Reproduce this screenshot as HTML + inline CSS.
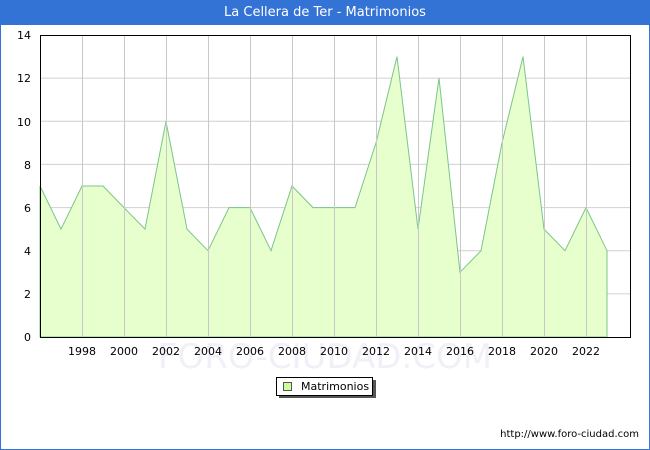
<!DOCTYPE html>
<html><head><style>
body{margin:0;width:650px;height:450px;overflow:hidden;font-family:"DejaVu Sans","Liberation Sans",sans-serif;}
.frame{position:absolute;left:0;top:0;width:648px;height:448px;border:1px solid #3473d6;background:#fff;}
.title{position:absolute;left:0;top:0;width:650px;height:25px;background:#3473d6;color:#fff;font-size:13px;line-height:25px;text-align:center;}
</style></head><body>
<div class="frame"></div>
<div class="title">La Cellera de Ter - Matrimonios</div>
<svg width="650" height="450" style="position:absolute;left:0;top:0" font-family="DejaVu Sans, Liberation Sans, sans-serif" font-size="11">
<text x="325" y="368" font-size="34" fill="#f0f0f8" text-anchor="middle">FORO-CIUDAD.COM</text>
<g stroke="#d0d0d0" stroke-width="1">
<line x1="40" y1="293.9" x2="630" y2="293.9"/><line x1="40" y1="250.7" x2="630" y2="250.7"/>
<line x1="40" y1="207.6" x2="630" y2="207.6"/><line x1="40" y1="164.4" x2="630" y2="164.4"/>
<line x1="40" y1="121.3" x2="630" y2="121.3"/><line x1="40" y1="78.1" x2="630" y2="78.1"/>
</g>
<polygon fill="#e6ffcc" stroke="#7cc48a" stroke-width="1" points="40,337 40,186 61,229.1 82,186 103,186 124,207.6 145,229.1 166,121.3 187,229.1 208,250.7 229,207.6 250,207.6 271,250.7 292,186 313,207.6 334,207.6 355,207.6 376,142.9 397,56.6 418,229.1 439,78.1 460,272.3 481,250.7 502,142.9 523,56.6 544,229.1 565,250.7 586,207.6 607,250.7 607,337"/>
<g stroke="#c8c8c8" stroke-width="1">
<line x1="82.5" y1="35" x2="82.5" y2="337"/><line x1="124.5" y1="35" x2="124.5" y2="337"/>
<line x1="166.5" y1="35" x2="166.5" y2="337"/><line x1="208.5" y1="35" x2="208.5" y2="337"/>
<line x1="250.5" y1="35" x2="250.5" y2="337"/><line x1="292.5" y1="35" x2="292.5" y2="337"/>
<line x1="334.5" y1="35" x2="334.5" y2="337"/><line x1="376.5" y1="35" x2="376.5" y2="337"/>
<line x1="418.5" y1="35" x2="418.5" y2="337"/><line x1="460.5" y1="35" x2="460.5" y2="337"/>
<line x1="502.5" y1="35" x2="502.5" y2="337"/><line x1="544.5" y1="35" x2="544.5" y2="337"/>
<line x1="586.5" y1="35" x2="586.5" y2="337"/>
</g>
<rect x="40.5" y="35.5" width="590" height="302" fill="none" stroke="#000"/>
<g text-anchor="end" fill="#000">
<text x="31" y="341">0</text><text x="31" y="298">2</text><text x="31" y="255">4</text><text x="31" y="212">6</text>
<text x="31" y="169">8</text><text x="31" y="126">10</text><text x="31" y="82">12</text><text x="31" y="39">14</text>
</g>
<g text-anchor="middle" fill="#000">
<text x="82" y="355">1998</text><text x="124" y="355">2000</text><text x="166" y="355">2002</text><text x="208" y="355">2004</text>
<text x="250" y="355">2006</text><text x="292" y="355">2008</text><text x="334" y="355">2010</text><text x="376" y="355">2012</text>
<text x="418" y="355">2014</text><text x="460" y="355">2016</text><text x="502" y="355">2018</text><text x="544" y="355">2020</text>
<text x="586" y="355">2022</text>
</g>
<rect x="279" y="380" width="97" height="18" fill="#555"/>
<rect x="276.5" y="377.5" width="96" height="18" fill="#fff" stroke="#000"/>
<rect x="283.5" y="382.5" width="8" height="8" fill="#ccff99" stroke="#555"/>
<text x="301" y="390" fill="#000">Matrimonios</text>
<text x="639" y="437" text-anchor="end" font-size="10" fill="#000">http://www.foro-ciudad.com</text>
</svg>
</body></html>
